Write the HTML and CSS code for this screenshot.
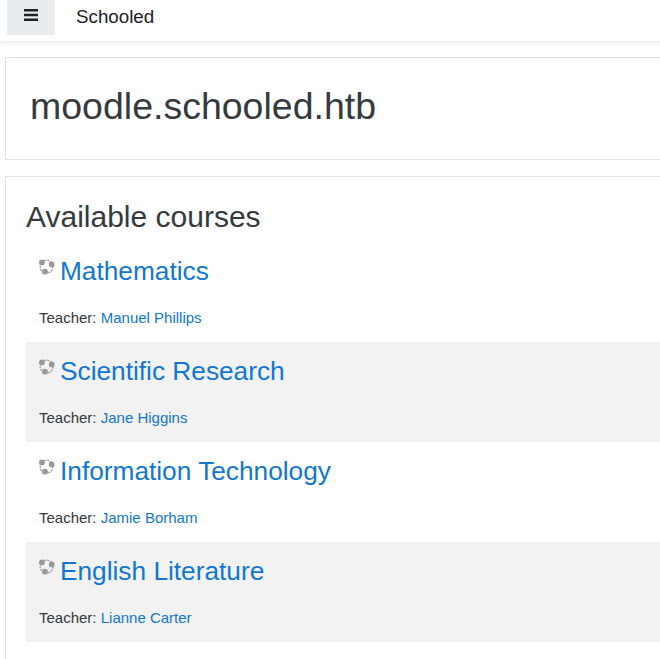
FILE: index.html
```html
<!DOCTYPE html>
<html lang="en">
<head>
<meta charset="UTF-8">
<title>Schooled</title>
<link rel="stylesheet" href="styles.css">
</head>
<body>

<nav class="navbar">
	<button class="menu-btn" type="button" aria-label="Menu">
		<svg width="14" height="12" viewBox="0 0 14 12"><path d="M0 0h14v2.4H0zM0 4.8h14v2.4H0zM0 9.6h14V12H0z" fill="#1d2125"/></svg>
	</button>
	<a class="brand" href="#">Schooled</a>
</nav>

<div class="page">
	<header class="card hero">
		<h1>moodle.schooled.htb</h1>
	</header>

	<section class="card courses">
		<h2>Available courses</h2>

		<div class="course">
			<h3><svg class="course-icon" width="16" height="16" viewBox="0 0 16 16"><use href="#cube"/></svg><a href="#">Mathematics</a></h3>
			<p class="teacher">Teacher: <a href="#">Manuel Phillips</a></p>
		</div>
		<div class="course odd">
			<h3><svg class="course-icon" width="16" height="16" viewBox="0 0 16 16"><use href="#cube"/></svg><a href="#">Scientific Research</a></h3>
			<p class="teacher">Teacher: <a href="#">Jane Higgins</a></p>
		</div>
		<div class="course">
			<h3><svg class="course-icon" width="16" height="16" viewBox="0 0 16 16"><use href="#cube"/></svg><a href="#">Information Technology</a></h3>
			<p class="teacher">Teacher: <a href="#">Jamie Borham</a></p>
		</div>
		<div class="course odd">
			<h3><svg class="course-icon" width="16" height="16" viewBox="0 0 16 16"><use href="#cube"/></svg><a href="#">English Literature</a></h3>
			<p class="teacher">Teacher: <a href="#">Lianne Carter</a></p>
		</div>
	</section>
</div>

<svg class="defs" width="0" height="0">
	<symbol id="cube" viewBox="0 0 16 16">
		<circle cx="7.6" cy="7.6" r="6.4" fill="none" stroke="#999" stroke-width="1.3" stroke-dasharray="2 1"/>
		<circle cx="2.9" cy="3.4" r="2.9" fill="#999"/>
		<circle cx="12.7" cy="5.4" r="2.9" fill="#999"/>
		<circle cx="6" cy="12.7" r="2.9" fill="#999"/>
	</symbol>
</svg>

</body>
</html>
```

FILE: styles.css
```css
* {
	box-sizing: border-box;
	margin: 0;
	padding: 0;
}
html, body {
	height: 100%;
	overflow: hidden;
}
body {
	width: 690px;
	background: #fff;
	color: #343a40;
	font: 15px/1.5 "Liberation Sans", Arial, sans-serif;
}
a {
	color: #1177d1;
	text-decoration: none;
}
.defs {
	position: absolute;
}
.navbar {
	display: flex;
	align-items: flex-start;
	height: 41px;
	padding-left: 7px;
	box-shadow: 0 2px 4px rgba(0, 0, 0, .08);
}
.menu-btn {
	display: flex;
	align-items: center;
	justify-content: center;
	width: 48px;
	height: 35px;
	padding-bottom: 6px;
	border: 0;
	background: #e9ecef;
}
.brand {
	margin: 3px 0 0 21px;
	color: #1d2125;
	font-size: 18.75px;
	line-height: 28px;
}
.page {
	padding: 16px 0 0 5px;
}
.card {
	border: 1px solid #dee2e6;
	background: #fff;
}
.hero {
	height: 103px;
	margin-bottom: 16px;
	padding: 24px;
}
.hero h1 {
	color: #343a40;
	font-size: 37.5px;
	font-weight: 400;
	line-height: 48px;
}
.courses {
	padding: 20px;
}
.courses h2 {
	margin-bottom: 5px;
	color: #343a40;
	font-size: 30px;
	font-weight: 400;
	line-height: 40px;
}
.course {
	height: 100px;
	padding: 10px 13px 0;
}
.course.odd {
	background: #f2f2f2;
}
.course h3 {
	font-size: 26.25px;
	font-weight: 400;
	line-height: 39px;
}
.course-icon {
	margin-right: 5px;
	vertical-align: 5px;
}
.teacher {
	margin-top: 16px;
	font-size: 15px;
	line-height: 22px;
}
```
